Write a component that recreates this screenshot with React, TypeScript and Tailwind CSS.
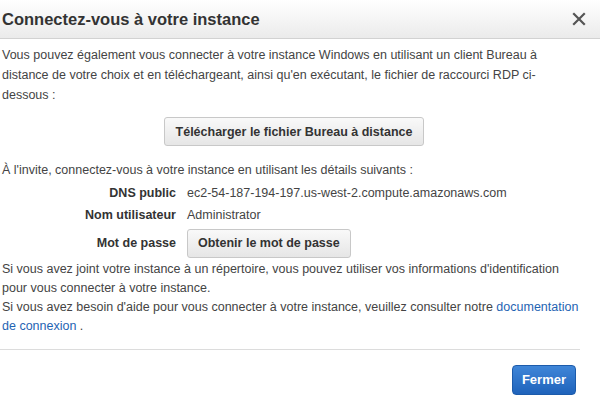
import React from 'react';

const App: React.FC = () => {
  return (
    <div
      className="w-[600px] h-[411px] bg-white overflow-hidden flex flex-col text-[12.5px] text-[#444]"
      style={{ fontFamily: '"Liberation Sans", Arial, sans-serif' }}
    >
      <div className="h-[39px] shrink-0 flex items-center justify-between pl-[2px] pr-[14px] bg-gradient-to-b from-white to-[#ebebeb] border-b border-[#d2d2d2]">
        <h2 className="text-[16.5px] font-bold text-[#333] leading-none">Connectez-vous à votre instance</h2>
        <button>
          <svg width="14" height="14" viewBox="0 0 14 14">
            <path d="M2 2 L12 12 M12 2 L2 12" stroke="#555" strokeWidth="2.2" strokeLinecap="square" />
          </svg>
        </button>
      </div>

      <div className="flex flex-col pl-[2px] pr-[12px] pt-[6px] leading-[20px] whitespace-nowrap">
        <p>
          Vous pouvez également vous connecter à votre instance Windows en utilisant un client Bureau à
          <br />
          distance de votre choix et en téléchargeant, ainsi qu'en exécutant, le fichier de raccourci RDP ci-
          <br />
          dessous :
        </p>

        <div className="flex justify-center pt-[12px] pb-[14px] pr-[2px]">
          <button className="h-[29px] px-[11px] rounded-[3px] border border-[#c8c8c8] bg-gradient-to-b from-[#f9f9f9] to-[#e6e6e6] font-bold text-[#333]">
            Télécharger le fichier Bureau à distance
          </button>
        </div>

        <p>À l'invite, connectez-vous à votre instance en utilisant les détails suivants :</p>

        <div className="grid grid-cols-[174px_1fr] gap-x-[11px] items-center mt-[2px]">
          <div className="text-right font-bold text-[#333] h-[22px] leading-[22px]">DNS public</div>
          <div className="h-[22px] leading-[22px]">ec2-54-187-194-197.us-west-2.compute.amazonaws.com</div>
          <div className="text-right font-bold text-[#333] h-[22px] leading-[22px]">Nom utilisateur</div>
          <div className="h-[22px] leading-[22px]">Administrator</div>
          <div className="text-right font-bold text-[#333] h-[35px] leading-[22px] pt-[6px]">Mot de passe</div>
          <div className="h-[35px] pt-[3px]">
            <button className="h-[29px] px-[10px] rounded-[3px] border border-[#c8c8c8] bg-gradient-to-b from-[#f9f9f9] to-[#e6e6e6] font-bold text-[#333] leading-none">
              Obtenir le mot de passe
            </button>
          </div>
        </div>

        <p className="leading-[19px] -mt-[1px]">
          Si vous avez joint votre instance à un répertoire, vous pouvez utiliser vos informations d'identification
          <br />
          pour vous connecter à votre instance.
        </p>
        <p className="leading-[19px]">
          Si vous avez besoin d'aide pour vous connecter à votre instance, veuillez consulter notre{' '}
          <a className="text-[#1f64b3]">documentation</a>
          <br />
          <a className="text-[#1f64b3]">de connexion</a> .
        </p>
      </div>

      <div className="mt-auto mr-[20px] border-t border-[#dcdcdc] flex justify-end pt-[15px] pb-[16px] pr-[4px]">
        <button className="h-[30px] px-[9px] rounded-[4px] border border-[#1c5bab] bg-gradient-to-b from-[#3f86d8] to-[#1f63bb] font-bold text-white text-[13px]">
          Fermer
        </button>
      </div>
    </div>
  );
};

export default App;
